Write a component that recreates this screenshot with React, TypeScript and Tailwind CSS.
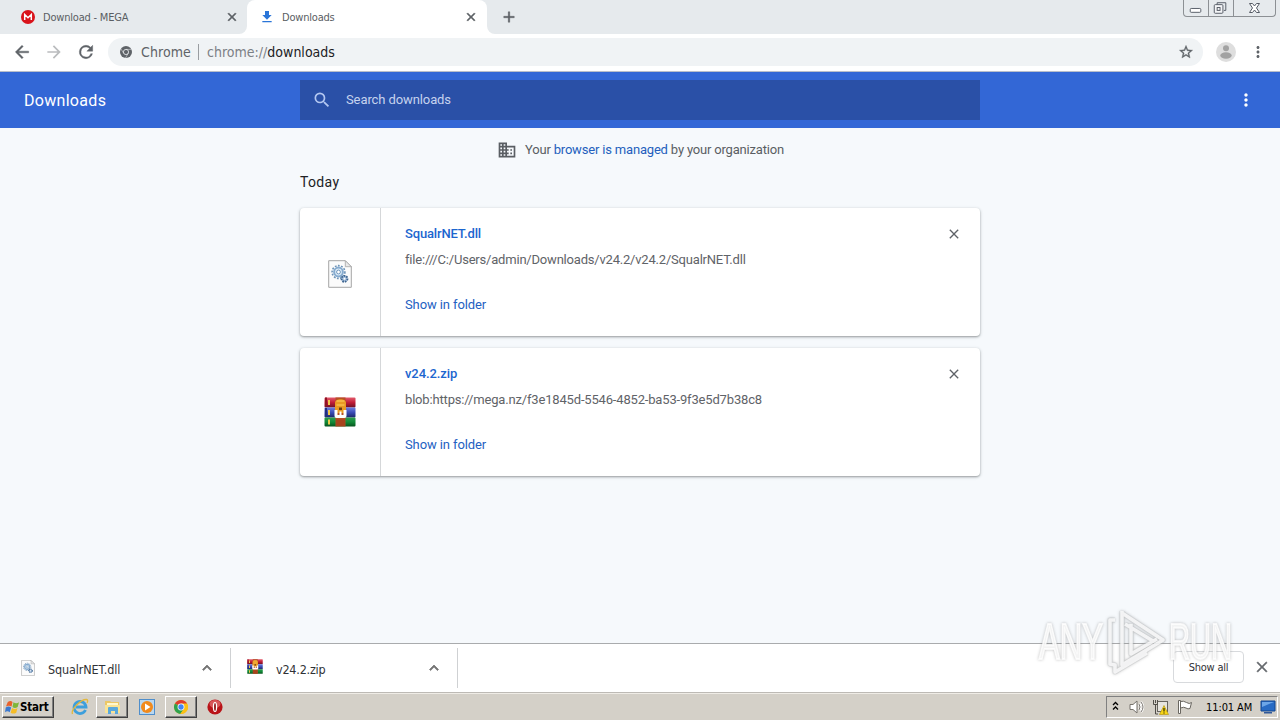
import type { ReactNode } from 'react';

interface Download {
  name: string;
  url: string;
  icon: ReactNode;
  urlTracking: string;
  nameTracking: string;
}

function MaterialIcon({ d, className }: { d: string; className: string }) {
  return (
    <svg viewBox="0 0 24 24" className={`block shrink-0 fill-current ${className}`}>
      <path d={d} />
    </svg>
  );
}

const ICONS = {
  download: 'M19 9h-4V3H9v6H5l7 7 7-7zM5 18v2h14v-2H5z',
  close: 'M19 6.41 17.59 5 12 10.59 6.41 5 5 6.41 10.59 12 5 17.59 6.41 19 12 13.41 17.59 19 19 17.59 13.41 12z',
  back: 'M20 11H7.83l5.59-5.59L12 4l-8 8 8 8 1.41-1.41L7.83 13H20v-2z',
  forward: 'M12 4l-1.41 1.41L16.17 11H4v2h12.17l-5.58 5.59L12 20l8-8z',
  reload:
    'M17.65 6.35A7.96 7.96 0 0 0 12 4a8 8 0 1 0 7.73 10h-2.08A6 6 0 1 1 12 6c1.66 0 3.14.69 4.22 1.78L13 11h7V4l-2.35 2.35z',
  plus: 'M19 13h-6v6h-2v-6H5v-2h6V5h2v6h6v2z',
  star: 'M22 9.24l-7.19-.62L12 2 9.19 8.63 2 9.24l5.46 4.73L5.82 21 12 17.27 18.18 21l-1.63-7.03L22 9.24zM12 15.4l-3.76 2.27 1-4.28-3.32-2.88 4.38-.38L12 6.1l1.71 4.04 4.38.38-3.32 2.88 1 4.28L12 15.4z',
  more: 'M12 8c1.1 0 2-.9 2-2s-.9-2-2-2-2 .9-2 2 .9 2 2 2zm0 2c-1.1 0-2 .9-2 2s.9 2 2 2 2-.9 2-2-.9-2-2-2zm0 6c-1.1 0-2 .9-2 2s.9 2 2 2 2-.9 2-2-.9-2-2-2z',
  search:
    'M15.5 14h-.79l-.28-.27A6.47 6.47 0 0 0 16 9.5 6.5 6.5 0 1 0 9.5 16c1.61 0 3.09-.59 4.23-1.57l.27.28v.79l5 4.99L20.49 19l-4.99-5zm-6 0C7.01 14 5 11.99 5 9.5S7.01 5 9.5 5 14 7.01 14 9.5 11.99 14 9.5 14z',
  domain:
    'M12 7V3H2v18h20V7H12zM6 19H4v-2h2v2zm0-4H4v-2h2v2zm0-4H4V9h2v2zm0-4H4V5h2v2zm4 12H8v-2h2v2zm0-4H8v-2h2v2zm0-4H8V9h2v2zm0-4H8V5h2v2zm10 12h-8v-2h2v-2h-2v-2h2v-2h-2V9h8v10zm-2-8h-2v2h2v-2zm0 4h-2v2h2v-2z',
  chevronUp: 'M12 8l-6 6 1.41 1.41L12 10.83l4.59 4.58L18 14z',
};

function DllIcon({ className }: { className: string }) {
  return (
    <svg viewBox="0 0 24 28" className={`block shrink-0 ${className}`}>
      <path d="M.7.7h16.6l6 6v20.6H.7z" fill="#fbfbfb" stroke="#a5a5a5" />
      <path d="M17.3.7v6h6z" fill="#e9e9e9" stroke="#a5a5a5" strokeWidth="0.8" />
      <circle cx="10.5" cy="12" r="6.4" fill="none" stroke="#6c93b8" strokeWidth="1.6" strokeDasharray="1.8 1.4" />
      <circle cx="10.5" cy="12" r="4.4" fill="#dcebf7" stroke="#86abcf" strokeWidth="2" />
      <circle cx="10.5" cy="12" r="1.9" fill="#fff" stroke="#5681ad" strokeWidth="0.8" />
      <circle cx="16.5" cy="18.8" r="3" fill="#9db9d8" stroke="#3c638f" strokeWidth="1.8" strokeDasharray="1.6 1" />
      <circle cx="16.5" cy="18.8" r="1" fill="#fff" />
    </svg>
  );
}

function RarIcon({ className }: { className: string }) {
  return (
    <svg viewBox="0 0 32 30" className={`block shrink-0 ${className}`}>
      <defs>
        <linearGradient id="rarRed" x2="0" y2="1">
          <stop stopColor="#e35b6b" />
          <stop offset="0.5" stopColor="#c01d38" />
          <stop offset="1" stopColor="#6d1024" />
        </linearGradient>
        <linearGradient id="rarBlue" x2="0" y2="1">
          <stop stopColor="#6e7fe0" />
          <stop offset="0.5" stopColor="#3a4cb5" />
          <stop offset="1" stopColor="#1c2767" />
        </linearGradient>
        <linearGradient id="rarGreen" x2="0" y2="1">
          <stop stopColor="#2d9d4e" />
          <stop offset="0.5" stopColor="#128a38" />
          <stop offset="1" stopColor="#08541e" />
        </linearGradient>
      </defs>
      <rect x="0.5" y="0.5" width="31" height="10" rx="1" fill="url(#rarRed)" />
      <rect x="0.5" y="10.5" width="31" height="10" rx="1" fill="url(#rarBlue)" />
      <rect x="0.5" y="20.5" width="31" height="9" rx="1" fill="url(#rarGreen)" />
      <path d="M1 .5h2v9H1z" fill="#8e1526" />
      <path d="M1 11h2v9H1z" fill="#252f80" />
      <path d="M4 3h2v5H4zM4 13h2v5H4zM4 22.5h2v5H4z" fill="#f0c94c" />
      <rect x="11.5" y="0.5" width="10" height="29" fill="#b55124" />
      <path d="M11 6c0-5 11-5 11 0v10H11z" fill="#e99a23" />
      <path d="M12.5 4h8M12.5 8h8" stroke="#ffcf61" strokeWidth="1.2" />
      <path d="M15 10.5h3v2.500h-3z" fill="#6b3b10" />
      <path d="M10.5 13v6q0 2 2 2h8q2 0 2-2v-6h-3v5h-2v-3.500h-2V18h-2v-5z" fill="#fff" />
      <rect x="12" y="22.5" width="9" height="6.5" fill="#a8431e" />
    </svg>
  );
}

function ChromeIcon({ className }: { className: string }) {
  return (
    <svg viewBox="0 0 20 20" className={`block shrink-0 ${className}`}>
      <circle cx="10" cy="10" r="10" fill="#fbc116" />
      <path d="M10 10 1.34 5A10 10 0 0 1 18.66 5z" fill="#de3c2f" />
      <path d="M10 10 1.34 5A10 10 0 0 0 9 20l5.5-7.5z" fill="#2fa24d" />
      <path d="M10 5h8.66A10 10 0 0 1 9 20l5.4-8z" fill="#fbc116" />
      <circle cx="10" cy="10" r="4.9" fill="#fff" />
      <circle cx="10" cy="10" r="3.8" fill="#4285f4" />
    </svg>
  );
}

function WindowControls() {
  return (
    <div className="mr-1 ml-auto grid h-[17px] w-[93px] grid-cols-[25px_25px_41px] rounded-b-[4px] border border-t-0 border-[#8c9094]">
      <svg viewBox="0 0 25 16" className="h-4 w-[25px] border-r border-[#8c9094]">
        <rect x="6.5" y="8.5" width="11" height="4" rx="1" fill="#fff" stroke="#555b65" />
      </svg>
      <svg viewBox="0 0 25 16" className="h-4 w-[25px] border-r border-[#8c9094]" fill="none" stroke="#555b65">
        <path d="M8.5 4.5v-2h9v8h-2" />
        <rect x="5.5" y="4.5" width="9" height="9" rx="1" fill="#f4f5f7" />
        <rect x="8.5" y="7.5" width="3" height="3" />
      </svg>
      <svg viewBox="0 0 41 16" className="h-4 w-[41px]">
        <path d="M15.5 3.5h3l2 2.5 2-2.5h3L22.5 8l3 4.5h-3l-2-2.5-2 2.5h-3L18.5 8z" fill="#fff" stroke="#555b65" />
      </svg>
    </div>
  );
}

function TabStrip() {
  return (
    <div className="flex h-[34px] bg-[#e6eaed] font-['DejaVu_Sans_Condensed','DejaVu_Sans',sans-serif] text-[11px] text-[#5a5e63]">
      <div className="flex w-[247px] items-center pl-[21px]">
        <svg viewBox="0 0 14 14" className="size-3.5 shrink-0">
          <circle cx="7" cy="7" r="7" fill="#d9131b" />
          <path d="M3.7 10V4.500L7 7.700l3.300-3.200V10" fill="none" stroke="#fff" strokeWidth="1.5" />
        </svg>
        <span className="mt-0.5 ml-2 tracking-[-0.2px] whitespace-nowrap">Download - MEGA</span>
        <MaterialIcon d={ICONS.close} className="mr-2 ml-auto size-3.5 stroke-current" />
      </div>
      <div className="relative flex w-60 items-center rounded-t-lg bg-white pl-3">
        <div className="absolute bottom-0 -left-2 size-2 bg-white">
          <div className="size-2 rounded-br-lg bg-[#e6eaed]" />
        </div>
        <div className="absolute -right-2 bottom-0 size-2 bg-white">
          <div className="size-2 rounded-bl-lg bg-[#e6eaed]" />
        </div>
        <MaterialIcon d={ICONS.download} className="size-4 text-[#2a75d8]" />
        <span className="mt-0.5 ml-[7px] tracking-[-0.2px]">Downloads</span>
        <MaterialIcon d={ICONS.close} className="mr-[9px] ml-auto size-3.5 stroke-current" />
      </div>
      <MaterialIcon d={ICONS.plus} className="mt-2 ml-[13px] size-[18px] stroke-current stroke-[0.5]" />
      <WindowControls />
    </div>
  );
}

function Toolbar() {
  return (
    <div className="flex h-[38px] items-center border-b border-[#b9bfca] bg-white pb-px pl-3 text-[#5f6368]">
      <MaterialIcon d={ICONS.back} className="size-5 stroke-current stroke-[0.5]" />
      <MaterialIcon d={ICONS.forward} className="ml-3 size-5 text-[#babcbe]" />
      <MaterialIcon d={ICONS.reload} className="ml-3 size-5 stroke-current stroke-[0.5]" />
      <div className="ml-3 flex h-7 w-[1095px] items-center rounded-full bg-[#f0f3f5] pl-3 font-['DejaVu_Sans_Condensed','DejaVu_Sans',sans-serif] text-sm font-extralight">
        <svg viewBox="0 0 12 12" className="size-3 shrink-0" fill="none">
          <circle cx="6" cy="6" r="6" fill="#5f6368" />
          <circle cx="6" cy="6" r="2.6" stroke="#f0f3f5" strokeWidth="0.8" />
          <path d="M6 3.400h5.500M3.700 7.300 1 3M8.200 7.300 5.500 12" stroke="#f0f3f5" strokeWidth="0.5" />
        </svg>
        <span className="ml-[9px] w-[49px] tracking-[0.1px]">Chrome</span>
        <span className="ml-2 h-4 w-px bg-[#9a9da1]" />
        <span className="ml-2 tracking-[0.01px] whitespace-nowrap text-[#7c8085]">
          chrome://<span className="text-[#202124]">downloads</span>
        </span>
        <MaterialIcon d={ICONS.star} className="mr-[9px] ml-auto size-4 stroke-current stroke-[0.5]" />
      </div>
      <svg viewBox="0 0 20 20" className="ml-[13px] size-5">
        <circle cx="10" cy="10" r="10" fill="#dedede" />
        <circle cx="10" cy="6.3" r="3" fill="#a2a2a2" />
        <ellipse cx="10" cy="13.5" rx="5.7" ry="3.2" fill="#a2a2a2" />
      </svg>
      <MaterialIcon d={ICONS.more} className="ml-[13px] size-[18px]" />
    </div>
  );
}

function DownloadCard({ item }: { item: Download }) {
  return (
    <div className="flex h-32 w-[680px] rounded bg-white shadow-[0_1px_2px_rgba(60,64,67,0.4),0_1px_3px_1px_rgba(60,64,67,0.12)]">
      <div className="flex w-[81px] items-center justify-center border-r border-[#d5d7d9]">{item.icon}</div>
      <div className="flex-1 pt-[17px] pl-6 text-[13px] leading-[18px]">
        <div className={`font-medium text-[#1c66cf] ${item.nameTracking}`}>{item.name}</div>
        <div className={`mt-2 text-[#5f6368] ${item.urlTracking}`}>{item.url}</div>
        <div className="mt-[27px] tracking-[-0.1px] text-[#2461c2]">Show in folder</div>
      </div>
      <MaterialIcon d={ICONS.close} className="mt-[18px] mr-[18px] size-4 text-[#5f6368]" />
    </div>
  );
}

const downloads: Download[] = [
  {
    name: 'SqualrNET.dll',
    url: 'file:///C:/Users/admin/Downloads/v24.2/v24.2/SqualrNET.dll',
    icon: <DllIcon className="mt-1 h-7 w-6" />,
    nameTracking: 'tracking-[-0.16px]',
    urlTracking: 'tracking-[-0.2px]',
  },
  {
    name: 'v24.2.zip',
    url: 'blob:https://mega.nz/f3e1845d-5546-4852-ba53-9f3e5d7b38c8',
    icon: <RarIcon className="h-[30px] w-8" />,
    nameTracking: 'tracking-[-0.1px]',
    urlTracking: 'tracking-[-0.17px]',
  },
];

interface ShelfItemProps {
  icon: ReactNode;
  name: string;
  className: string;
}

function ShelfItem({ icon, name, className }: ShelfItemProps) {
  return (
    <div className={`mb-px flex h-10 items-center border-r border-[#cfd1d3] ${className}`}>
      {icon}
      <span className="mt-1.5 ml-[13px]">{name}</span>
      <MaterialIcon d={ICONS.chevronUp} className="ml-auto size-[18px] stroke-current text-[#757575]" />
    </div>
  );
}

function Watermark() {
  const logo = 'M88 7v54l41-25L88 9M97 20v30l26-15M81 16h-5v44l5 1v7l32-19M91 20l28 17';
  return (
    <svg
      viewBox="0 0 204 74"
      className="absolute top-[604px] left-[1034px] h-[74px] w-[204px] overflow-visible"
      style={{ filter: 'drop-shadow(0 0 1.5px rgba(80,80,80,0.4))' }}
    >
      <g
        fill="#fff"
        fillOpacity="0.8"
        stroke="#fff"
        strokeOpacity="0.8"
        strokeWidth="2"
        fontFamily="Liberation Sans, sans-serif"
        fontSize="50"
      >
        <text x="5" y="55" textLength="64" lengthAdjust="spacingAndGlyphs">ANY</text>
        <text x="135" y="55" textLength="63" lengthAdjust="spacingAndGlyphs">RUN</text>
      </g>
      <g fill="none" strokeLinejoin="round">
        <path d={logo} stroke="#bfc3c6" strokeOpacity="0.35" strokeWidth="5.5" />
        <path d={logo} stroke="#fff" strokeOpacity="0.8" strokeWidth="3.5" />
      </g>
    </svg>
  );
}

function Shelf() {
  return (
    <div className="flex h-[50px] items-center border-t border-b border-t-[#a9abad] border-b-[#bdbab5] bg-white font-['DejaVu_Sans_Condensed','DejaVu_Sans',sans-serif] text-[12.5px] font-extralight text-[#303236]">
      <ShelfItem
        className="w-[231px] pr-3.5 pl-[21px] tracking-[-0.12px]"
        icon={<DllIcon className="h-4 w-3.5" />}
        name="SqualrNET.dll"
      />
      <ShelfItem
        className="w-[227px] pr-3.5 pl-4 tracking-[-0.22px]"
        icon={<RarIcon className="mb-0.5 h-[15px] w-4" />}
        name="v24.2.zip"
      />
      <div className="mb-0.5 ml-auto flex h-8 w-[71px] items-center justify-center rounded border border-[#d8dadd] bg-white pt-0.5 text-[11px] font-normal tracking-[-0.22px]">
        Show all
      </div>
      <MaterialIcon d={ICONS.close} className="mr-[9px] mb-0.5 ml-[9px] size-[18px] stroke-current stroke-[0.5] text-[#666a6e]" />
    </div>
  );
}

const RAISED =
  'border border-t-white border-l-white border-r-[#404040] border-b-[#404040] shadow-[inset_-1px_-1px_0_#808080]';

function Taskbar() {
  return (
    <div className="flex h-[27px] items-center border-t border-[#efece6] bg-[#d4d0c8] pl-0.5 font-['DejaVu_Sans_Condensed','DejaVu_Sans',sans-serif] text-[11px] text-black">
      <div className={`flex h-[22px] w-[52px] items-center pl-0.5 ${RAISED}`}>
        <svg viewBox="0 0 16 16" className="size-[15px] shrink-0">
          <path d="M3 2q3-2 5 0L7 7Q4 5 1 7z" fill="#e9622c" />
          <path d="M9 2.500q3 2 6 0L13.500 7.500q-3 2-5.500 0z" fill="#7fb63a" />
          <path d="M.8 8q3-2 5.800 0L5 13Q2.500 11 0 13z" fill="#3b79cf" />
          <path d="M7.500 8.500q3 2 5.800 0L12 13.500q-3 2-6 0z" fill="#f6bd27" />
        </svg>
        <span className="mt-0.5 text-[11.5px] font-bold tracking-[-0.2px]">Start</span>
      </div>
      <svg viewBox="0 0 18 18" className="ml-[17px] size-[18px]" fill="none">
        <path d="M14.500 12A6 6 0 1 1 15 9H5" stroke="#3d9fdc" strokeWidth="2.8" />
        <path d="M1.500 16C-.500 12 10 1 15.500 1.500q2 .5 .5 3.500" stroke="#e3b83c" strokeWidth="1.3" />
      </svg>
      <div className={`ml-[7px] flex h-[22px] w-8 items-center justify-center ${RAISED}`}>
        <svg viewBox="0 0 17 16" className="h-4 w-[17px]">
          <path d="M1 2h5l1 1h8v11H1z" fill="#ecc765" />
          <path d="M3 4h11v3H3z" fill="#fff7cc" />
          <path d="M1 6h15v8H1z" fill="#f9e394" />
          <path d="M4 15V9q0-1 1-1h8q1 0 1 1v6h-3v-3H7v3z" fill="#59a8dc" />
        </svg>
      </div>
      <svg viewBox="0 0 16 16" className="ml-[11px] size-4">
        <rect x="0.5" y="0.5" width="15" height="15" fill="#b9d7ef" stroke="#4f8ecb" />
        <circle cx="8" cy="8" r="6" fill="#f18a1c" />
        <path d="M6 4.500v7l5.500-3.500z" fill="#fff" />
      </svg>
      <div className={`ml-2.5 flex h-[22px] w-8 items-center justify-center ${RAISED}`}>
        <ChromeIcon className="size-3.5" />
      </div>
      <svg viewBox="0 0 16 16" className="ml-2.5 size-4">
        <circle cx="8" cy="8" r="7.6" fill="#b91318" />
        <ellipse cx="8" cy="5" rx="5.5" ry="4" fill="#d8575a" />
        <ellipse cx="8" cy="8" rx="2.2" ry="5" fill="#fff" />
        <ellipse cx="8" cy="8" rx="0.9" ry="4" fill="#8b1013" />
      </svg>
      <div className="mr-0.5 ml-auto flex h-[22px] w-[172px] items-center border border-t-[#808080] border-r-white border-b-white border-l-[#808080] pl-[5px]">
        <svg viewBox="0 0 7 10" className="mb-0.5 h-2.5 w-[7px]" fill="none" stroke="#000" strokeWidth="1.3">
          <path d="M1 4l2.500-2.500L6 4M1 8.500 3.500 6 6 8.500" />
        </svg>
        <svg viewBox="0 0 17 16" className="ml-2.5 h-4 w-[17px]" fill="none" stroke="#77736d">
          <path d="M1 5.500h3L8 2v12l-4-3.500H1z" fill="#fff" />
          <path d="M10 5q2 3 0 6M12 3q4 5 0 10" stroke="#fff" strokeWidth="2.5" />
          <path d="M10 5q2 3 0 6M12 3q4 5 0 10" />
        </svg>
        <svg viewBox="0 0 16 16" className="ml-[7px] size-4" fill="none">
          <rect x="4.5" y="2.5" width="10" height="10" fill="#e7e5df" stroke="#67645e" />
          <path d="M.500 1v4.500h4V1M2.500 1v3M2.500 5.500V15H5" stroke="#514e49" />
          <path d="m11 6.500 4.500 9H6.500z" fill="#f7d516" stroke="#b19007" strokeWidth="0.6" />
          <path d="M11 9v3.500M11 13.500v1" stroke="#000" />
        </svg>
        <svg viewBox="0 0 16 16" className="ml-2 size-4" fill="#fff" stroke="#6a6761">
          <path d="M1.500 1.500h2v13h-2zM3.500 2.500q3-1 6 1t5 0l-1.500 6q-2 1-4-.5t-5.500 0z" />
        </svg>
        <span className="mt-0.5 ml-[13px] tracking-[-0.1px] whitespace-nowrap">11:01 AM</span>
        <svg viewBox="0 0 16 16" className="mr-px ml-auto size-4 shrink-0">
          <path d="M1 2h14v10H1z" fill="#286bc4" stroke="#12468f" />
          <path d="M2 3h12L2 8z" fill="#6ca6e8" />
          <path d="M4 13h8v1.500H4z" fill="#30599a" />
        </svg>
      </div>
    </div>
  );
}

export default function App() {
  return (
    <div className="relative flex h-[720px] w-[1280px] flex-col overflow-hidden bg-[#f6f9fc] font-[Roboto,sans-serif]">
      <TabStrip />
      <Toolbar />
      <header className="flex h-14 shrink-0 items-center bg-[#3367d6] text-white">
        <h1 className="w-[300px] pt-0.5 pl-6 text-base tracking-[0.3px]">Downloads</h1>
        <div className="flex h-10 w-[680px] items-center bg-[#2a50a7] pl-3 text-[13px] tracking-[-0.1px] text-[#c6d3ee]">
          <MaterialIcon d={ICONS.search} className="size-5 text-[#b3c7f1]" />
          <span className="ml-3.5">Search downloads</span>
        </div>
        <MaterialIcon d={ICONS.more} className="mr-6 ml-auto size-5" />
      </header>
      <main className="flex flex-1 flex-col items-center">
        <div className="mt-3 flex h-5 items-center pl-px text-[13px] text-[#5a5e63]">
          <MaterialIcon d={ICONS.domain} className="size-5" />
          <span className="ml-2 tracking-[-0.18px]">
            Your <span className="text-[#245fbd]">browser is managed</span> by your organization
          </span>
        </div>
        <div className="w-[680px]">
          <h2 className="mt-3 mb-4 text-sm leading-5 tracking-[0.35px] text-[#202124]">Today</h2>
          <div className="flex flex-col gap-3">
            {downloads.map((item) => (
              <DownloadCard key={item.name} item={item} />
            ))}
          </div>
        </div>
      </main>
      <Shelf />
      <Taskbar />
      <Watermark />
    </div>
  );
}
